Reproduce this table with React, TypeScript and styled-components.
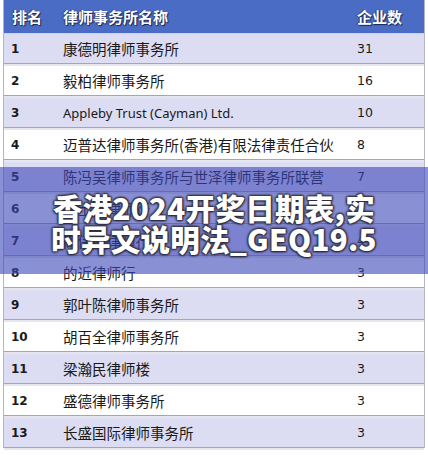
import React from "react";
import styled, { createGlobalStyle } from "styled-components";

const Global = createGlobalStyle`
  html, body { margin: 0; padding: 0; background: #ffffff; }
  body { width: 428px; height: 455px; overflow: hidden; }
`;

const Page = styled.div`
  position: relative;
  width: 428px;
  height: 455px;
  background: #ffffff;
  overflow: hidden;
`;

const Table = styled.div`
  margin-left: 3px;
  width: 420px;
  border-left: 1px solid #b4b6c4;
  border-right: 1px solid #b4b6c4;
  box-shadow: inset 3px 0 0 #ffffff, inset 4px 0 0 #c6c8d8;
  font-family: "Noto Sans CJK SC", "Noto Sans", sans-serif;
`;

const Grid = styled.div`
  display: grid;
  grid-template-columns: 54px 291px 1fr;
  align-items: center;
`;

const HeaderRow = styled(Grid)`
  height: 33px;
  background: #4a6cc4;
  border-bottom: 1px solid #c8d4ee;
  color: #ffffff;
  font-weight: 700;
  font-size: 15px;
  text-shadow: 1px 1px 1px #1c2650, -1px 0 1px #2a3870;
`;

const HeaderCell = styled.div<{ $pad: number }>`
  padding-left: ${(p) => p.$pad}px;
  white-space: nowrap;
`;

const Row = styled(Grid)<{ $odd: boolean }>`
  height: 29px;
  background: ${(p) => (p.$odd ? "#dcdcf2" : "#ffffff")};
  border-bottom: 1px solid #a4a6b4;
  box-shadow: 0 2px 0 #e6e6ee;
  margin-bottom: 2px;
`;

const Rank = styled.div`
  padding-left: 7px;
  font-family: "DejaVu Sans", sans-serif;
  font-weight: 700;
  font-size: 12px;
  color: #1a1a1a;
`;

const Name = styled.div<{ $latin?: boolean }>`
  padding-left: 5px;
  font-family: ${(p) =>
    p.$latin ? `"Noto Sans", sans-serif` : `"Noto Sans CJK SC", sans-serif`};
  font-size: ${(p) => (p.$latin ? "13px" : "14.5px")};
  color: #1a1a1a;
  white-space: nowrap;
  overflow: hidden;
`;

const Count = styled.div`
  padding-left: 8px;
  font-family: "DejaVu Sans", sans-serif;
  font-size: 12.5px;
  color: #1a1a1a;
`;

const Overlay = styled.div`
  position: absolute;
  left: 0;
  top: 167px;
  width: 428px;
  height: 107px;
  padding-top: 4px;
  box-sizing: border-box;
  background: rgba(60, 70, 183, 0.6);
  display: flex;
  flex-direction: column;
  align-items: center;
  justify-content: center;
`;

const Caption = styled.div`
  font-family: "Noto Sans CJK SC", sans-serif;
  font-weight: 900;
  font-size: 29.5px;
  line-height: 31px;
  color: #ffffff;
  letter-spacing: 0.3px;
  white-space: nowrap;
  text-shadow: 1px 1px 2px #2a2a3a, -1px -1px 2px #3a3a4a, 1px -1px 2px #2a2a3a,
    -1px 1px 2px #2a2a3a;
`;

const rows: { name: string; count: string; latin?: boolean }[] = [
  { name: "康德明律师事务所", count: "31" },
  { name: "毅柏律师事务所", count: "16" },
  { name: "Appleby Trust (Cayman) Ltd.", count: "10", latin: true },
  { name: "迈普达律师事务所(香港)有限法律责任合伙", count: "8" },
  { name: "陈冯吴律师事务所与世泽律师事务所联营", count: "7" },
  { name: "孖士打律师行", count: "4" },
  { name: "高伟绅律师行", count: "4" },
  { name: "的近律师行", count: "3" },
  { name: "郭叶陈律师事务所", count: "3" },
  { name: "胡百全律师事务所", count: "3" },
  { name: "梁瀚民律师楼", count: "3" },
  { name: "盛德律师事务所", count: "3" },
  { name: "长盛国际律师事务所", count: "3" },
];

export default function App() {
  return (
    <Page>
      <Global />
      <Table>
        <HeaderRow>
          <HeaderCell $pad={8}>排名</HeaderCell>
          <HeaderCell $pad={5}>律师事务所名称</HeaderCell>
          <HeaderCell $pad={8}>企业数</HeaderCell>
        </HeaderRow>
        {rows.map((r, i) => (
          <Row key={i} $odd={i % 2 === 0}>
            <Rank>{i + 1}</Rank>
            <Name $latin={r.latin}>{r.name}</Name>
            <Count>{r.count}</Count>
          </Row>
        ))}
      </Table>
      <Overlay>
        <Caption>香港2024开奖日期表,实</Caption>
        <Caption>时异文说明法_GEQ19.5</Caption>
      </Overlay>
    </Page>
  );
}
